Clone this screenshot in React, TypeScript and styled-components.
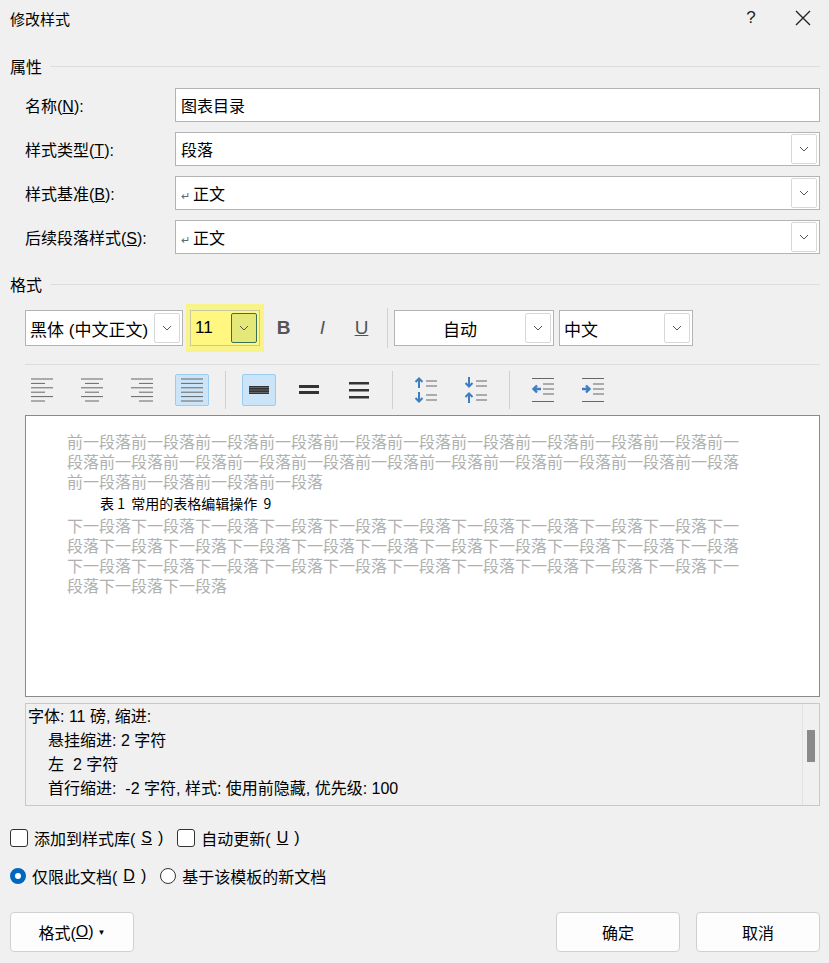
import React from 'react';
import styled, { createGlobalStyle } from 'styled-components';

const Global = createGlobalStyle`
  html, body { margin: 0; padding: 0; background: #f0f0f0; }
  body { font-family: "Liberation Sans", "Noto Sans CJK SC", sans-serif; color: #000; }
`;

const Dialog = styled.div`
  width: 829px;
  height: 963px;
  background: #f0f0f0;
  display: flex;
  flex-direction: column;
  box-sizing: border-box;
  overflow: hidden;
`;

const TitleBar = styled.div`
  height: 36px;
  display: flex;
  align-items: center;
  padding-left: 10px;
  font-size: 15px;
`;

const TitleText = styled.div`
  flex: 1;
`;

const TitleBtn = styled.div`
  width: 52px;
  height: 36px;
  display: flex;
  align-items: center;
  justify-content: center;
  font-size: 17px;
  color: #222;
`;

const Body = styled.div`
  padding: 0 9px 0 10px;
  display: flex;
  flex-direction: column;
`;

const SectionHead = styled.div`
  display: flex;
  align-items: center;
  gap: 8px;
  font-size: 16px;
  height: 24px;
  margin-top: ${p => p.$mt}px;
  &::after {
    content: '';
    flex: 1;
    height: 1px;
    background: #dcdcdc;
  }
`;

const FieldRow = styled.div`
  display: flex;
  align-items: center;
  padding-left: 15px;
  height: 34px;
  margin-top: 10px;
`;

const FieldLabel = styled.div`
  width: 150px;
  font-size: 16px;
`;

const FieldBox = styled.div`
  flex: 1;
  height: 34px;
  box-sizing: border-box;
  background: #fff;
  border: 1px solid #b4b4b4;
  display: flex;
  align-items: center;
  padding-left: 5px;
  font-size: 16px;
`;

const BoxText = styled.div`
  flex: 1;
`;

const DropBtn = styled.div`
  width: 24px;
  height: 28px;
  margin-right: 2px;
  border: 1px solid #d8d8d8;
  border-radius: 2px;
  display: flex;
  align-items: center;
  justify-content: center;
  background: ${p => (p.$hl ? '#e4e879' : '#fff')};
  border-color: ${p => (p.$hl ? '#3b6e57' : '#d8d8d8')};
`;

const Chevron = () => (
  <svg width="10" height="6" viewBox="0 0 10 6">
    <path d="M1 1 L5 5 L9 1" stroke="#555" fill="none" strokeWidth="1" />
  </svg>
);

const Para = styled.span`
  font-size: 11px;
  color: #666;
  margin-right: 3px;
`;

const FontRow = styled.div`
  display: flex;
  align-items: center;
  padding-left: 15px;
  margin-top: 8px;
  height: 48px;
`;

const Combo = styled.div`
  width: ${p => p.$w}px;
  height: 36px;
  box-sizing: border-box;
  background: ${p => (p.$hl ? '#fff780' : '#fff')};
  border: 1px solid ${p => (p.$hl ? '#c9c9a0' : '#b4b4b4')};
  display: flex;
  align-items: center;
  padding-left: ${p => (p.$center ? 0 : 4)}px;
  font-size: 17px;
  margin-left: ${p => p.$ml || 0}px;
`;

const ComboText = styled.div`
  flex: 1;
  text-align: ${p => (p.$center ? 'center' : 'left')};
`;

const Highlight = styled.div`
  background: #f8f48a;
  padding: 6px 4px;
  margin-left: 3px;
  display: flex;
`;

const StyleBtn = styled.div`
  width: 39px;
  text-align: center;
  font-size: 19px;
  color: #555;
  font-family: "Liberation Sans", sans-serif;
  font-weight: ${p => (p.$b ? 700 : 400)};
  font-style: ${p => (p.$i ? 'italic' : 'normal')};
  text-decoration: ${p => (p.$u ? 'underline' : 'none')};
`;

const VSep = styled.div`
  width: 1px;
  height: ${p => p.$h}px;
  background: #d0d0d0;
  margin: 0 ${p => p.$m}px;
`;

const HLine = styled.div`
  height: 1px;
  background: #dcdcdc;
  margin: 12px 0 0 15px;
`;

const IconRow = styled.div`
  display: flex;
  align-items: center;
  padding-left: 15px;
  margin-top: 8px;
  height: 34px;
`;

const IconBtn = styled.div`
  width: 34px;
  height: 32px;
  box-sizing: border-box;
  margin-right: 16px;
  display: flex;
  align-items: center;
  justify-content: center;
  border: 1px solid ${p => (p.$on ? '#9ccbf0' : 'transparent')};
  background: ${p => (p.$on ? '#cce4f7' : 'transparent')};
  border-radius: 2px;
`;

const Align = ({ kind }: { kind: 'l' | 'c' | 'r' | 'j' }) => {
  const lines = [0, 1, 2, 3, 4, 5].map(i => {
    const short = i % 2 === 1;
    const w = kind === 'j' ? 22 : short ? 14 : 22;
    let x = 2;
    if (kind === 'c') x = 2 + (22 - w) / 2;
    if (kind === 'r') x = 2 + 22 - w;
    return <line key={i} x1={x} x2={x + w} y1={3 + i * 4.4} y2={3 + i * 4.4} stroke="#666" strokeWidth="1" />;
  });
  return <svg width="26" height="28" viewBox="0 0 26 28">{lines}</svg>;
};

const Spacing = ({ n }: { n: number }) => (
  <svg width="24" height="20" viewBox="0 0 24 20">
    {n === 1 && <rect x="2" y="6" width="20" height="8" fill="#333" />}
    {n === 1 && [7.5, 10, 12.5].map(y => <line key={y} x1="2" x2="22" y1={y} y2={y} stroke="#888" strokeWidth="0.6" />)}
    {n === 2 && <><rect x="2" y="5" width="20" height="3" fill="#333" /><rect x="2" y="11" width="20" height="3" fill="#333" /></>}
    {n === 3 && <><rect x="2" y="2" width="20" height="2.5" fill="#333" /><rect x="2" y="9" width="20" height="2.5" fill="#333" /><rect x="2" y="16" width="20" height="2.5" fill="#333" /></>}
  </svg>
);

const ParaSpace = ({ inward }: { inward?: boolean }) => (
  <svg width="26" height="28" viewBox="0 0 26 28">
    {inward ? (
      <>
        <path d="M6 1 V10 M2.5 7 L6 10.5 L9.5 7" stroke="#3d7ec0" strokeWidth="2" fill="none" />
        <path d="M6 27 V18 M2.5 21 L6 17.5 L9.5 21" stroke="#3d7ec0" strokeWidth="2" fill="none" />
      </>
    ) : (
      <>
        <path d="M6 12 V3 M2.5 6 L6 2.5 L9.5 6" stroke="#3d7ec0" strokeWidth="2" fill="none" />
        <path d="M6 16 V25 M2.5 22 L6 25.5 L9.5 22" stroke="#3d7ec0" strokeWidth="2" fill="none" />
      </>
    )}
    {[5, 10, 19, 24].map(y => <line key={y} x1="13" x2="24" y1={y} y2={y} stroke="#666" strokeWidth="1" />)}
  </svg>
);

const Indent = ({ inc }: { inc?: boolean }) => (
  <svg width="26" height="28" viewBox="0 0 26 28">
    {[3, 26].map(y => <line key={y} x1="2" x2="24" y1={y - 0.5} y2={y - 0.5} stroke="#666" strokeWidth="1" />)}
    {[8, 13, 18].map(y => <line key={y} x1="13" x2="24" y1={y} y2={y} stroke="#666" strokeWidth="1" />)}
    {inc ? (
      <path d="M2 13 H9 M6 9.5 L9.5 13 L6 16.5" stroke="#3d7ec0" strokeWidth="2.4" fill="none" />
    ) : (
      <path d="M11 13 H4 M7 9.5 L3.5 13 L7 16.5" stroke="#3d7ec0" strokeWidth="2.4" fill="none" />
    )}
  </svg>
);

const Preview = styled.div`
  margin: 8px 0 0 15px;
  height: 282px;
  box-sizing: border-box;
  background: #fff;
  border: 1px solid #8a8a8a;
  padding: 15px 0 0 41px;
`;

const Ghost = styled.div`
  font-size: 16px;
  line-height: 20px;
  color: #b0b0b0;
  white-space: nowrap;
  font-family: "Noto Sans CJK SC", sans-serif;
`;

const Sample = styled.div`
  font-size: 14px;
  line-height: 20px;
  padding: 2px 0 2px 33px;
  white-space: pre;
  font-family: "Noto Sans CJK SC", sans-serif;
`;

const Desc = styled.div`
  margin: 6px 0 0 15px;
  height: 103px;
  box-sizing: border-box;
  border: 1px solid #c8c8c8;
  display: flex;
`;

const DescText = styled.div`
  flex: 1;
  font-size: 16px;
  line-height: 24px;
  padding: 1px 0 0 2px;
  white-space: pre;
`;

const DescLine = styled.div`
  padding-left: ${p => (p.$in ? 20 : 0)}px;
`;

const Scroll = styled.div`
  width: 16px;
  border-left: 1px solid #e2e2e2;
  padding-top: 26px;
  display: flex;
  justify-content: center;
`;

const Thumb = styled.div`
  width: 8px;
  height: 32px;
  background: #8a8a8a;
`;

const OptRow = styled.div`
  display: flex;
  align-items: center;
  margin-top: ${p => p.$mt}px;
  gap: 14px;
  font-size: 16px;
`;

const Opt = styled.label`
  display: flex;
  align-items: center;
  gap: 6px;
`;

const Check = styled.span`
  width: 16px;
  height: 16px;
  border: 1px solid #333;
  border-radius: 3px;
  background: #fff;
  display: inline-block;
`;

const Radio = styled.span`
  width: 16px;
  height: 16px;
  border-radius: 50%;
  box-sizing: border-box;
  border: ${p => (p.$on ? '5px solid #0067c0' : '1px solid #333')};
  background: #fff;
  display: inline-block;
`;

const Footer = styled.div`
  display: flex;
  align-items: center;
  margin-top: 24px;
  gap: 16px;
`;

const Button = styled.div`
  width: 124px;
  height: 40px;
  box-sizing: border-box;
  border: 1px solid #d0d0d0;
  border-radius: 4px;
  background: #fdfdfd;
  display: flex;
  align-items: center;
  justify-content: center;
  font-size: 16px;
`;

const Caret = styled.span`
  font-size: 8px;
  margin-left: 4px;
`;

const Spacer = styled.div`
  flex: 1;
`;

const Fields: [string, string, string, boolean, boolean][] = [
  ['名称(', 'N', '图表目录', false, false],
  ['样式类型(', 'T', '段落', true, false],
  ['样式基准(', 'B', '正文', true, true],
  ['后续段落样式(', 'S', '正文', true, true],
];

const prev = ['前一段落'.repeat(10) + '前一', '段落' + '前一段落'.repeat(10), '前一段落'.repeat(4)];
const next = [
  '下一段落'.repeat(10) + '下一',
  '段落' + '下一段落'.repeat(10),
  '下一段落'.repeat(10) + '下一',
  '段落下一段落下一段落',
];

export default function App() {
  return (
    <Dialog>
      <Global />
      <TitleBar>
        <TitleText>修改样式</TitleText>
        <TitleBtn>?</TitleBtn>
        <TitleBtn>
          <svg width="16" height="16" viewBox="0 0 16 16">
            <path d="M1 1 L15 15 M15 1 L1 15" stroke="#222" strokeWidth="1.4" />
          </svg>
        </TitleBtn>
      </TitleBar>
      <Body>
        <SectionHead $mt={18}>属性</SectionHead>
        {Fields.map(([l, k, v, drop, para]) => (
          <FieldRow key={l}>
            <FieldLabel>
              {l}
              <u>{k}</u>):
            </FieldLabel>
            <FieldBox>
              <BoxText>
                {para && <Para>↵</Para>}
                {v}
              </BoxText>
              {drop && (
                <DropBtn>
                  <Chevron />
                </DropBtn>
              )}
            </FieldBox>
          </FieldRow>
        ))}
        <SectionHead $mt={18}>格式</SectionHead>
        <FontRow>
          <Combo $w={158}>
            <ComboText>黑体 (中文正文)</ComboText>
            <DropBtn>
              <Chevron />
            </DropBtn>
          </Combo>
          <Highlight>
            <Combo $w={70} $hl>
              <ComboText>11</ComboText>
              <DropBtn $hl>
                <Chevron />
              </DropBtn>
            </Combo>
          </Highlight>
          <StyleBtn $b>B</StyleBtn>
          <StyleBtn $i>I</StyleBtn>
          <StyleBtn $u>U</StyleBtn>
          <VSep $h={40} $m={6} />
          <Combo $w={160} $center>
            <ComboText $center>自动</ComboText>
            <DropBtn>
              <Chevron />
            </DropBtn>
          </Combo>
          <Combo $w={134} $ml={5}>
            <ComboText>中文</ComboText>
            <DropBtn>
              <Chevron />
            </DropBtn>
          </Combo>
        </FontRow>
        <HLine />
        <IconRow>
          <IconBtn><Align kind="l" /></IconBtn>
          <IconBtn><Align kind="c" /></IconBtn>
          <IconBtn><Align kind="r" /></IconBtn>
          <IconBtn $on><Align kind="j" /></IconBtn>
          <VSep $h={38} $m={0} style={{ marginRight: 16 }} />
          <IconBtn $on><Spacing n={1} /></IconBtn>
          <IconBtn><Spacing n={2} /></IconBtn>
          <IconBtn><Spacing n={3} /></IconBtn>
          <VSep $h={38} $m={0} style={{ marginRight: 16 }} />
          <IconBtn><ParaSpace /></IconBtn>
          <IconBtn><ParaSpace inward /></IconBtn>
          <VSep $h={38} $m={0} style={{ marginRight: 16 }} />
          <IconBtn><Indent /></IconBtn>
          <IconBtn><Indent inc /></IconBtn>
        </IconRow>
        <Preview>
          {prev.map((t, i) => <Ghost key={i}>{t}</Ghost>)}
          <Sample>表 1  常用的表格编辑操作  9</Sample>
          {next.map((t, i) => <Ghost key={i}>{t}</Ghost>)}
        </Preview>
        <Desc>
          <DescText>
            <DescLine>字体: 11 磅, 缩进:</DescLine>
            <DescLine $in>悬挂缩进: 2 字符</DescLine>
            <DescLine $in>左  2 字符</DescLine>
            <DescLine $in>首行缩进:  -2 字符, 样式: 使用前隐藏, 优先级: 100</DescLine>
          </DescText>
          <Scroll>
            <Thumb />
          </Scroll>
        </Desc>
        <OptRow $mt={20}>
          <Opt><Check />添加到样式库(<u>S</u>)</Opt>
          <Opt><Check />自动更新(<u>U</u>)</Opt>
        </OptRow>
        <OptRow $mt={14}>
          <Opt><Radio $on />仅限此文档(<u>D</u>)</Opt>
          <Opt><Radio />基于该模板的新文档</Opt>
        </OptRow>
        <Footer>
          <Button>格式(<u>O</u>)<Caret>▼</Caret></Button>
          <Spacer />
          <Button>确定</Button>
          <Button>取消</Button>
        </Footer>
      </Body>
    </Dialog>
  );
}
